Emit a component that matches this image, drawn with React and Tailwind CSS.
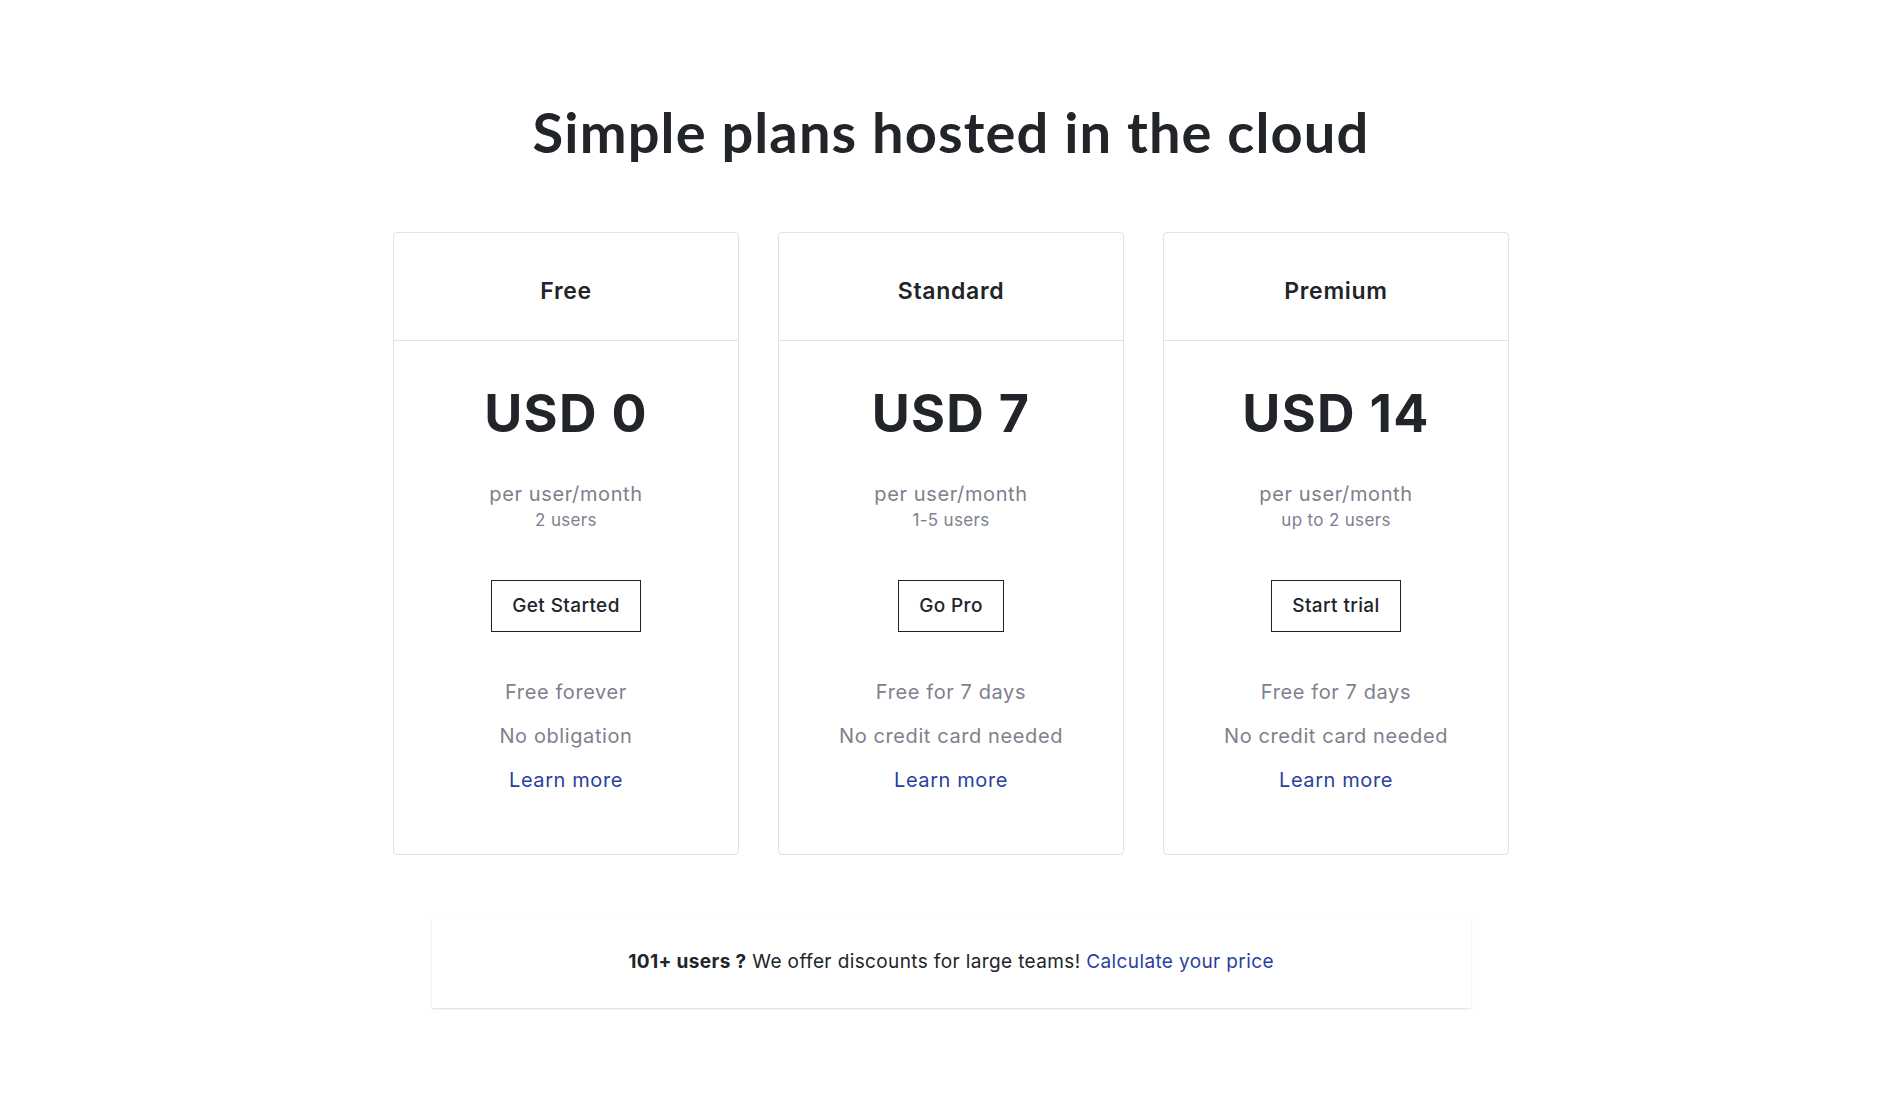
import React from "react";

const plans = [
  {
    name: "Free",
    price: "USD 0",
    users: "2 users",
    cta: "Get Started",
    perks: ["Free forever", "No obligation"],
  },
  {
    name: "Standard",
    price: "USD 7",
    users: "1-5 users",
    cta: "Go Pro",
    perks: ["Free for 7 days", "No credit card needed"],
  },
  {
    name: "Premium",
    price: "USD 14",
    users: "up to 2 users",
    cta: "Start trial",
    perks: ["Free for 7 days", "No credit card needed"],
  },
];

const PlanCard = ({ plan }) => (
  <div className="border border-[#e2e2e2] rounded-[4px] bg-white flex flex-col">
    {/* Card header */}
    <div className="h-[108px] flex items-center justify-center border-b border-[#e2e2e2] pt-[8px]">
      <h2 className="text-[23px] leading-7 font-semibold text-[#212529] tracking-[0.03em]">{plan.name}</h2>
    </div>

    {/* Card body */}
    <div className="flex flex-col items-center pt-[47px] pb-[60px] text-center">
      <div className="text-[52px] leading-[52px] font-bold text-[#212529] tracking-[0.025em]">{plan.price}</div>
      <p className="mt-[40px] text-[20px] leading-7 text-[#7f808d] tracking-[0.03em]">per user/month</p>
      <p className="text-[17px] leading-6 text-[#7f808d] tracking-[0.02em]">{plan.users}</p>
      <button className="mt-[48px] h-[52px] px-[20px] border border-[#222] text-[19px] font-medium text-[#212529] bg-white tracking-[0.02em]">
        {plan.cta}
      </button>
      <div className="mt-[46px] flex flex-col gap-[16px] text-[20px] leading-7 tracking-[0.03em]">
        {plan.perks.map((perk) => (
          <p key={perk} className="text-[#7f808d]">{perk}</p>
        ))}
        <a href="#" className="text-[#2a3f9f]">Learn more</a>
      </div>
    </div>
  </div>
);

const App = () => {
  return (
    <div className="min-h-screen bg-white font-['Inter',sans-serif] pb-[90px]">
      <div className="pt-[104px] flex flex-col items-center">
        <h1 className="font-['Lato',sans-serif] text-[56px] leading-[55px] font-bold text-[#212529] tracking-[0.02em]">
          Simple plans hosted in the cloud
        </h1>

        {/* Pricing cards */}
        <div className="mt-[73px] grid grid-cols-3 gap-[39px] w-[1116px]">
          {plans.map((plan) => (
            <PlanCard key={plan.name} plan={plan} />
          ))}
        </div>

        {/* Large teams banner */}
        <div className="mt-[62px] w-[1039px] h-[91px] flex items-center justify-center bg-white shadow-[0_1px_2px_rgba(0,0,0,0.14)]">
          <p className="text-[19px] text-[#212529] tracking-[0.02em]">
            <span className="font-bold">101+ users ?</span> We offer discounts for large teams!{" "}
            <a href="#" className="text-[#2a3f9f]">Calculate your price</a>
          </p>
        </div>
      </div>
    </div>
  );
};

export default App;
